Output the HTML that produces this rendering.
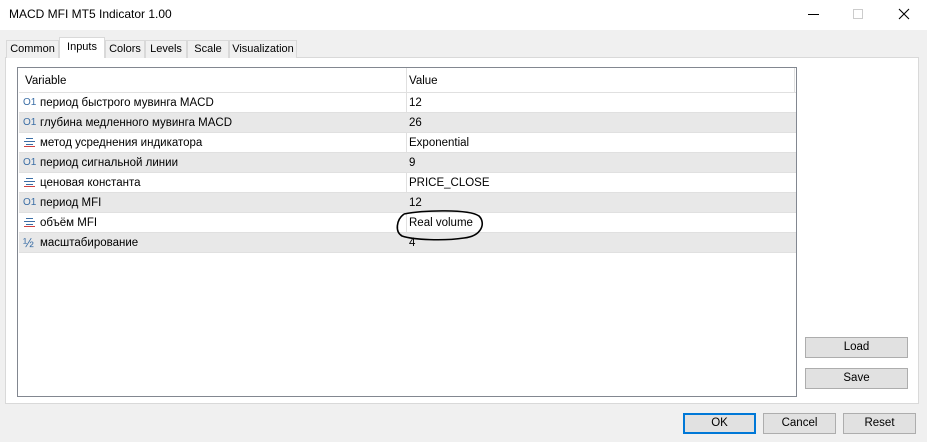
<!DOCTYPE html>
<html><head><style>
*{margin:0;padding:0;box-sizing:border-box}
body{width:927px;height:442px;background:#f0f0f0;font-family:"Liberation Sans",sans-serif;font-size:11.5px;color:#000;position:relative;overflow:hidden}
.abs{position:absolute}
.title{left:0;top:0;width:927px;height:30px;background:#fff}
.tab{position:absolute;top:40px;height:18px;border:1px solid #d9d9d9;border-bottom:none;background:#f0f0f0;text-align:center;line-height:16px;font-size:11px}
.tab.sel{top:37px;height:21px;background:#fff;z-index:2;line-height:18px}
.panel{left:5px;top:57px;width:914px;height:347px;background:#fff;border:1px solid #d9d9d9}
.list{left:17px;top:67px;width:780px;height:330px;border:1px solid #828790;background:#fff}
.row{position:absolute;left:1px;width:777px;height:20px;border-top:1px solid #e0e0e0;line-height:20px}
.row.g{background:#e8e8e8}
.row span,.row svg{position:absolute}
.row svg{left:5px;top:4px;display:block}
.v{left:390px}
.btn{position:absolute;height:21px;background:#e1e1e1;border:1px solid #adadad;text-align:center;line-height:19px}
.o1{left:4px;color:#3b6ea5;font-size:10px}
</style></head><body>
<div class="abs title"><div class="abs" style="left:9px;top:7px;font-size:12px">MACD MFI MT5 Indicator 1.00</div>
<div class="abs" style="left:808px;top:14px;width:11px;height:1px;background:#000"></div>
<div class="abs" style="left:853px;top:9px;width:10px;height:10px;border:1px solid #ccc"></div>
<svg class="abs" style="left:898px;top:8px" width="12" height="12"><path d="M1 1L11 11M11 1L1 11" stroke="#000" stroke-width="1.1"/></svg>
</div>
<div class="abs panel"></div>
<div class="tab" style="left:6px;width:53px">Common</div>
<div class="tab sel" style="left:59px;width:46px">Inputs</div>
<div class="tab" style="left:105px;width:40px">Colors</div>
<div class="tab" style="left:145px;width:42px">Levels</div>
<div class="tab" style="left:187px;width:42px">Scale</div>
<div class="tab" style="left:229px;width:68px">Visualization</div>
<div class="abs list">
<div class="abs" style="left:7px;top:7px">Variable</div>
<div class="abs" style="left:388px;top:0;width:1px;height:184px;background:#e0e0e0"></div>
<div class="abs" style="left:391px;top:7px">Value</div>
<div class="abs" style="left:776px;top:0;width:1px;height:24px;background:#e0e0e0"></div>
<div class="row" style="top:24px"><span class="o1">O1</span><span style="left:21px">период быстрого мувинга MACD</span><span class="v">12</span></div>
<div class="row g" style="top:44px"><span class="o1">O1</span><span style="left:21px">глубина  медленного мувинга MACD</span><span class="v">26</span></div>
<div class="row" style="top:64px"><svg width="11" height="10"><path d="M2 1.5H9M0 4.5H11M2 7.5H9" stroke="#3b6ea5"/><path d="M0 9.5H11" stroke="#d04040"/></svg><span style="left:21px">метод усреднения индикатора</span><span class="v">Exponential</span></div>
<div class="row g" style="top:84px"><span class="o1">O1</span><span style="left:21px">период сигнальной линии</span><span class="v">9</span></div>
<div class="row" style="top:104px"><svg width="11" height="10"><path d="M2 1.5H9M0 4.5H11M2 7.5H9" stroke="#3b6ea5"/><path d="M0 9.5H11" stroke="#d04040"/></svg><span style="left:21px">ценовая константа</span><span class="v">PRICE_CLOSE</span></div>
<div class="row g" style="top:124px"><span class="o1">O1</span><span style="left:21px">период MFI</span><span class="v">12</span></div>
<div class="row" style="top:144px"><svg width="11" height="10"><path d="M2 1.5H9M0 4.5H11M2 7.5H9" stroke="#3b6ea5"/><path d="M0 9.5H11" stroke="#d04040"/></svg><span style="left:21px">объём MFI</span><span class="v">Real volume</span></div>
<div class="row g" style="top:164px;border-bottom:1px solid #e0e0e0;height:21px"><span style="left:4px;color:#3b6ea5;font-size:13px">½</span><span style="left:21px">масштабирование</span><span class="v">4</span></div>
</div>
<svg class="abs" style="left:394px;top:208px" width="92" height="36"><path d="M10 6C30 2 75 1 85 8C92 15 88 28 70 30C50 33 20 32 8 28C1 24 2 12 10 6" fill="none" stroke="#000" stroke-width="1.6"/></svg>
<div class="btn" style="left:805px;top:337px;width:103px">Load</div>
<div class="btn" style="left:805px;top:368px;width:103px">Save</div>
<div class="btn" style="left:683px;top:413px;width:73px;border:2px solid #0078d7;line-height:17px">OK</div>
<div class="btn" style="left:763px;top:413px;width:73px">Cancel</div>
<div class="btn" style="left:843px;top:413px;width:73px">Reset</div>
</body></html>
